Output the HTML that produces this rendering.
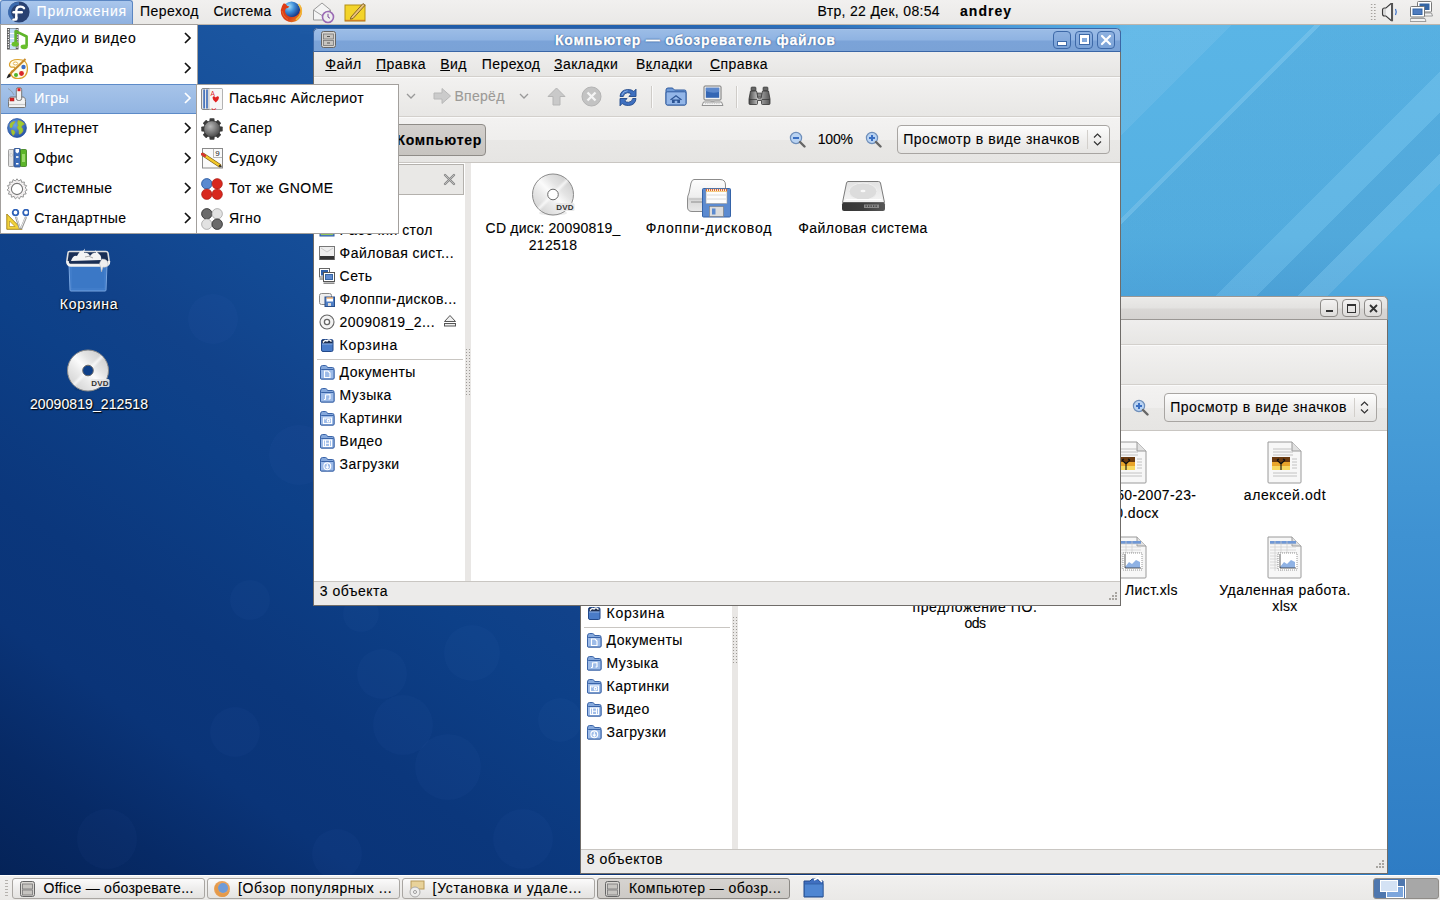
<!DOCTYPE html>
<html><head><meta charset="utf-8">
<style>
*{box-sizing:border-box;margin:0;padding:0}
html,body{width:1440px;height:900px;overflow:hidden}
body{position:relative;font-family:"Liberation Sans",sans-serif;font-size:13px;color:#000;
background:
 linear-gradient(32deg,#062560 0%,#0b3477 25%,#124592 42%,#1d5ba8 52%,#3f92d6 64%,#5ab4e6 76%,#62bbea 100%);}
.a{position:absolute}
.t{position:absolute;font-size:14px;line-height:16px;white-space:nowrap;letter-spacing:0.45px;-webkit-text-stroke:0.12px currentColor}
.b{font-weight:bold}
/* panels */
#toppanel{left:0;top:0;width:1440px;height:25px;background:linear-gradient(#f1f0ef,#eae9e7);border-bottom:1px solid #bdb6ad}
#botpanel{left:0;top:875px;width:1440px;height:25px;background:linear-gradient(#f1f0ef,#eae9e7);border-top:1px solid #fff}
/* window */
.win{position:absolute;width:808px;height:578px;background:#edeceb;border:1px solid #6f6c69;border-top:none;border-radius:5px 5px 0 0}
.title{position:absolute;left:-1px;top:0;width:808px;height:24px;border-radius:5px 5px 0 0;border:1px solid #3a66a6;
 background:linear-gradient(#a9c8ee 0,#9bbce6 1px,#8fb3e2 11px,#7ba3d8 12px,#7aa2d6 22px)}
.inactive .title{border-color:#9a9794;background:linear-gradient(#f4f3f2 0,#ebeae8 1px,#e3e2e0 11px,#d9d7d5 12px,#d4d2d0 22px)}
.wbtn{position:absolute;top:2px;width:18px;height:18px;border:1px solid #3d69a8;border-radius:4px;background:linear-gradient(#8eb1e0,#7aa2d7)}
.inactive .wbtn{border-color:#8d8a87;background:linear-gradient(#f3f2f1,#dedcda)}
.menubar{position:absolute;left:0;top:24px;width:806px;height:25px;background:linear-gradient(#efeeed,#e7e6e4);border-bottom:1px solid #d3d0cc}
.toolbar{position:absolute;left:0;top:49px;width:806px;height:40px;background:linear-gradient(#f2f1f0,#e8e7e5);border-bottom:1px solid #d3d0cc;border-top:1px solid #fafafa}
.locbar{position:absolute;left:0;top:89px;width:806px;height:46px;background:linear-gradient(#f3f2f1 0,#efeeed 50%,#e9e8e6 51%,#e6e5e3 100%);border-bottom:1px solid #c9c6c2;border-top:1px solid #fafafa}
.side{position:absolute;left:0;top:135px;width:151px;height:418px;background:#fff}
.handle{position:absolute;left:151px;top:135px;width:6px;height:418px;background:#e9e7e5}
.view{position:absolute;left:157px;top:135px;width:649px;height:418px;background:#fff}
.status{position:absolute;left:0;top:553px;width:806px;height:24px;background:#ecebea;border-top:1px solid #c9c6c2}
.combo{position:absolute;width:213px;height:29px;border:1px solid #a8a5a2;border-radius:4px;background:linear-gradient(#fdfdfd,#f0efee 50%,#e6e5e3)}
/* menus */
.menu{position:absolute;background:#fff;border:1px solid #a3a09d}
.hl{position:absolute;background:linear-gradient(#a6c3e9,#93b5e2);border-top:1px solid #5d8bc8;border-bottom:1px solid #5d8bc8}
.ic{position:absolute}
.shadowtxt{color:#fff;text-shadow:1px 1px 1px #000,0 0 2px #000}
</style></head>
<body>
<div class="a" style="left:0;top:24px;width:600px;height:851px;background:linear-gradient(35deg,#052358 0%,#072a66 10%,#0a3478 20%,#0b377c 30%,#0d4088 45%,#11428a 52%,#134a94 62%,#1a55a0 79%,#2060ac 100%)"></div><div class="a" style="left:1120px;top:24px;width:320px;height:851px;background:linear-gradient(#5ab5e6 0%,#55b0e2 25%,#4ea6dc 33%,#3f92d2 60%,#2e7cc4 100%)"></div><div class="a" style="left:300px;top:24px;width:830px;height:10px;background:linear-gradient(90deg,#1c58a3 0%,#2462ae 40%,#2f74bd 65%,#4a9ad8 85%,#5ab4e6 100%)"></div><div class="a" style="left:1120px;top:24px;width:320px;height:272px;background:linear-gradient(135deg,rgba(255,255,255,.07) 0 19%,transparent 19% 33%,rgba(255,255,255,.12) 33% 34%,rgba(0,30,90,.03) 34% 62%,rgba(255,255,255,.08) 62% 69%,rgba(0,30,90,.05) 69% 76%,rgba(255,255,255,.1) 76% 81%,transparent 81%)"></div><div class="a" style="left:415px;top:734px;width:66px;height:66px;border-radius:50%;background:rgba(120,170,255,.03)"></div><div class="a" style="left:373px;top:695px;width:60px;height:60px;border-radius:50%;background:rgba(120,170,255,.03)"></div><div class="a" style="left:444px;top:625px;width:56px;height:56px;border-radius:50%;background:rgba(120,170,255,.03)"></div><div class="a" style="left:343px;top:596px;width:36px;height:36px;border-radius:50%;background:rgba(120,170,255,.03)"></div><div class="a" style="left:493px;top:809px;width:60px;height:60px;border-radius:50%;background:rgba(120,170,255,.03)"></div><div class="a" style="left:312px;top:829px;width:50px;height:50px;border-radius:50%;background:rgba(120,170,255,.03)"></div><div class="a" style="left:357px;top:649px;width:50px;height:50px;border-radius:50%;background:rgba(120,170,255,.03)"></div><div class="a" style="left:188px;top:294px;width:50px;height:50px;border-radius:50%;background:rgba(120,170,255,.03)"></div><div class="a" style="left:269px;top:425px;width:60px;height:60px;border-radius:50%;background:rgba(120,170,255,.03)"></div><div class="a" style="left:210px;top:707px;width:50px;height:50px;border-radius:50%;background:rgba(120,170,255,.03)"></div><div class="a" style="left:77px;top:809px;width:60px;height:60px;border-radius:50%;background:rgba(120,170,255,.03)"></div><div class="a" style="left:538px;top:698px;width:44px;height:44px;border-radius:50%;background:rgba(120,170,255,.03)"></div><div class="a" style="left:230px;top:580px;width:40px;height:40px;border-radius:50%;background:rgba(120,170,255,.03)"></div><svg class="a" style="left:65px;top:247px" width="46" height="46" viewBox="0 0 46 46">
<path d="M4 17.5 L5 43 Q5 44 6 44 H40 Q41 44 41 43 L42 17.5Z" fill="#3b78c6" stroke="#7aa6e0" stroke-width="1"/>
<path d="M6 19 V42 H40 V19" fill="none" stroke="#5b90d8" stroke-width=".6" opacity=".7"/>
<path d="M3 6 Q3 4.5 4.5 4.5 H41 Q42.5 4.5 43 6 L44 13 Q44.5 17.5 41 17.5 H5 Q1.5 17.5 2 13Z" fill="#1a2f55" stroke="#e0e0e0" stroke-width="1.6"/>
<path d="M2.5 14 Q2.5 18.5 6 18.5 H40 Q44 18.5 44 14" fill="none" stroke="#f2f2f2" stroke-width="2.6"/>
<path d="M6 14 Q8 8 12 9 Q15 3 18 4 L20 1.5 L19 6 Q23 5 25 9 Q28 5 31 6 L30 3 L34 7 Q37 9 36 13 Z" fill="#f4f4f4"/>
<path d="M20 10 Q24 8 28 11" stroke="#aaa" stroke-width="1" fill="none"/>
<path d="M37 12 Q43 12 43 17 Q42 21 38 20 L36.5 25 L35.5 19 Q33 17 37 12Z" fill="#eeeeee" stroke="#bbb" stroke-width=".5"/>
</svg><div class="t shadowtxt" style="left:29px;top:296.15px;width:120px;text-align:center;letter-spacing:0.73px">Корзина</div><svg class="a" style="left:66px;top:349px" width="44" height="44" viewBox="0 0 44 44">
<defs><linearGradient id="dl66349" x1="0" y1="1" x2="1" y2="0"><stop offset="0" stop-color="#c9c9c9"/><stop offset=".35" stop-color="#e9e9e9"/><stop offset=".5" stop-color="#fbfbfb"/><stop offset=".65" stop-color="#e4e4e4"/><stop offset="1" stop-color="#c4c4c4"/></linearGradient>
<linearGradient id="dm66349" x1="0" y1="0" x2="1" y2="1"><stop offset="0" stop-color="#fff" stop-opacity="0"/><stop offset=".45" stop-color="#fff" stop-opacity=".0"/><stop offset=".5" stop-color="#fff" stop-opacity=".7"/><stop offset=".55" stop-color="#fff" stop-opacity="0"/></linearGradient></defs>
<ellipse cx="22" cy="40" rx="14" ry="2.5" fill="#000" opacity=".08"/>
<circle cx="22" cy="21.5" r="20.5" fill="url(#dl66349)" stroke="#8a8a8a"/>
<circle cx="22" cy="21.5" r="20" fill="url(#dm66349)"/>
<circle cx="22" cy="21.5" r="5.3" fill="#0e3f88" stroke="#6a6a6a"/>
<rect x="24.5" y="30" width="19" height="8" rx="1.5" fill="#e6e6e6" opacity=".92"/>
<text x="25.3" y="36.8" font-size="8" font-weight="bold" fill="#333" font-family="Liberation Sans" letter-spacing=".2">DVD</text>
</svg><div class="t shadowtxt" style="left:19px;top:396.15px;width:140px;text-align:center;letter-spacing:0.09px">20090819_212518</div><div class="win inactive" style="left:580px;top:296px"><div class="title"><div class="wbtn" style="left:739px"><div class="a" style="left:5px;top:10px;width:7px;height:2px;background:#333"></div></div><div class="wbtn" style="left:761px"><div class="a" style="left:4px;top:4px;width:9px;height:9px;border:1px solid #333;border-top-width:2px"></div></div><div class="wbtn" style="left:783px"><svg class="a" style="left:3px;top:3px" width="11" height="11" viewBox="0 0 11 11"><path d="M2 2 L9 9 M9 2 L2 9" stroke="#333" stroke-width="1.8"/></svg></div></div><div class="menubar"></div><div class="toolbar"></div><div class="locbar"></div><div class="side"></div><div class="handle"></div><div class="view"></div><div class="status"></div><div class="a" style="left:151px;top:320px;width:6px;height:47px;background-image:radial-gradient(circle at 1.5px 1.5px,#9d9a96 0.55px,transparent 0.9px);background-size:3px 3px"></div><div class="t" style="letter-spacing:0.46px;left:11.3px;top:28.15px"><u>Ф</u>айл</div><div class="t" style="letter-spacing:0.44px;left:62.1px;top:28.15px"><u>П</u>равка</div><div class="t" style="letter-spacing:0.45px;left:126.2px;top:28.15px"><u>В</u>ид</div><div class="t" style="letter-spacing:0.45px;left:167.7px;top:28.15px">Пере<u>х</u>од</div><div class="t" style="letter-spacing:0.45px;left:240px;top:28.15px"><u>З</u>акладки</div><div class="t" style="letter-spacing:0.45px;left:322px;top:28.15px">В<u>к</u>ладки</div><div class="t" style="letter-spacing:0.45px;left:396px;top:28.15px"><u>С</u>правка</div><svg class="a" style="left:92px;top:65px" width="10" height="7" viewBox="0 0 10 7"><path d="M1 1 L5 5 L9 1" stroke="#999" stroke-width="1.3" fill="none"/></svg><svg class="a" style="left:119px;top:59px" width="19" height="18" viewBox="0 0 19 18"><path d="M1 6 H9 V1.5 L17.5 9 L9 16.5 V12 H1Z" fill="#cbcbcb" stroke="#b8b8b8"/></svg><div class="t" style="left:140.4px;top:60.15px;color:#9c9a97;letter-spacing:0.31px">Вперёд</div><svg class="a" style="left:205px;top:65px" width="10" height="7" viewBox="0 0 10 7"><path d="M1 1 L5 5 L9 1" stroke="#999" stroke-width="1.3" fill="none"/></svg><svg class="a" style="left:233px;top:59px" width="19" height="19" viewBox="0 0 19 19"><path d="M9.5 1 L18 9.5 H13 V18 H6 V9.5 H1Z" fill="#c9c9c9" stroke="#b5b5b5"/></svg><svg class="a" style="left:267px;top:58px" width="21" height="21" viewBox="0 0 21 21"><circle cx="10.5" cy="10.5" r="9.5" fill="#c3c3c3" stroke="#b3b3b3"/><path d="M6.5 6.5 L14.5 14.5 M14.5 6.5 L6.5 14.5" stroke="#f4f4f4" stroke-width="2.4"/></svg><svg class="a" style="left:304px;top:59px" width="20" height="21" viewBox="0 0 20 21"><path d="M2 9.5 Q2.5 3 9.5 2.5 Q13.5 2.3 15.8 4.5 L18 2.2 V9.5 H10.8 L13.2 7.2 Q11.8 5.6 9.6 5.7 Q5.6 6 5.3 9.5Z" fill="#3f70c0" stroke="#23498a" stroke-width=".9" stroke-linejoin="round"/><path d="M18 11.5 Q17.5 18 10.5 18.5 Q6.5 18.7 4.2 16.5 L2 18.8 V11.5 H9.2 L6.8 13.8 Q8.2 15.4 10.4 15.3 Q14.4 15 14.7 11.5Z" fill="#3f70c0" stroke="#23498a" stroke-width=".9" stroke-linejoin="round"/><path d="M4 8 Q5 4 9.5 3.8" stroke="#8fb4ea" stroke-width=".9" fill="none"/></svg><div class="a" style="left:337px;top:58px;width:1px;height:22px;background:#cfccc8;box-shadow:1px 0 0 #fafafa"></div><svg class="a" style="left:351px;top:59px" width="22" height="19" viewBox="0 0 22 19"><path d="M1 3 Q1 1 3 1 H7 Q8 1 8.8 2.2 L9.5 3 H19.5 Q21 3 21 4.5 V16.5 Q21 18 19.5 18 H2.5 Q1 18 1 16.5Z" fill="#6f9ad6" stroke="#2f5a9e"/><path d="M1 6 Q1 4.8 2.2 4.8 H19.8 Q21 4.8 21 6 V16.5 Q21 18 19.5 18 H2.5 Q1 18 1 16.5Z" fill="#93b6e8" stroke="#2f5a9e"/><path d="M5 12.5 L11 8 L17 12.5 L16 13.2 L11 9.6 L6 13.2Z M7 12.5 H15 V16 H12.3 V13.8 H9.7 V16 H7Z" fill="#2c5494"/></svg><svg class="a" style="left:387px;top:57px" width="23" height="22" viewBox="0 0 23 22"><rect x="3" y="1" width="17" height="14" rx="1" fill="#f2f2f2" stroke="#777"/><rect x="4.8" y="2.8" width="13.4" height="10" fill="#3466b4"/><path d="M4.8 2.8 H18.2 V7 Q11 9 4.8 6Z" fill="#5c88cc"/><rect x="9.5" y="15" width="4" height="2" fill="#bbb"/><path d="M2.5 17 H20.5 L22 20.5 H1Z" fill="#f4f4f4" stroke="#888" stroke-width=".9"/><path d="M4 18.6 H19" stroke="#bbb" stroke-width=".8" stroke-dasharray="1 .8"/></svg><div class="a" style="left:422px;top:58px;width:1px;height:22px;background:#cfccc8;box-shadow:1px 0 0 #fafafa"></div><svg class="a" style="left:434px;top:58px" width="23" height="19" viewBox="0 0 23 19"><defs><linearGradient id="bng" x1="0" y1="0" x2="1" y2="0"><stop offset="0" stop-color="#4a4a4a"/><stop offset=".4" stop-color="#bdbdbd"/><stop offset="1" stop-color="#555"/></linearGradient></defs><rect x="3" y="1" width="5" height="4" rx="1" fill="#666" stroke="#333" stroke-width=".6"/><rect x="15" y="1" width="5" height="4" rx="1" fill="#666" stroke="#333" stroke-width=".6"/><path d="M2.5 5 H8.5 L10 12 H13 L14.5 5 H20.5 L22 13 V17.5 Q22 18.5 21 18.5 H14.5 Q13.5 18.5 13.5 17.5 V14.5 H9.5 V17.5 Q9.5 18.5 8.5 18.5 H2 Q1 18.5 1 17.5 V13Z" fill="url(#bng)" stroke="#333" stroke-width=".8"/><rect x="9.5" y="7" width="4" height="4" fill="#888" stroke="#333" stroke-width=".6"/><path d="M1.5 13.5 H9 M14 13.5 H21.5" stroke="#333" stroke-width=".7"/></svg><div class="a" style="left:40px;top:96px;width:132px;height:32px;border:1px solid #8f8c88;border-radius:4px;background:linear-gradient(#d3d0cd,#c7c4c0)"></div><div class="t b" style="left:82.5px;top:104.15px;letter-spacing:0.7px">Компьютер</div><svg class="a" style="left:475px;top:103px" width="17" height="17" viewBox="0 0 17 17"><circle cx="7" cy="7" r="5.6" fill="#b9d3f2" stroke="#6f8fba" stroke-width="1.2"/><path d="M4 7 H10" stroke="#3a6fc2" stroke-width="2"/><path d="M11 11 L15.5 15.5" stroke="#666" stroke-width="2.4" stroke-linecap="round"/></svg><div class="t" style="left:503.7px;top:103.15px;letter-spacing:-0.17px">100%</div><svg class="a" style="left:551px;top:103px" width="17" height="17" viewBox="0 0 17 17"><circle cx="7" cy="7" r="5.6" fill="#b9d3f2" stroke="#6f8fba" stroke-width="1.2"/><path d="M4 7 H10 M7 4 V10" stroke="#3a6fc2" stroke-width="2"/><path d="M11 11 L15.5 15.5" stroke="#666" stroke-width="2.4" stroke-linecap="round"/></svg><div class="combo" style="left:583px;top:97px"></div><div class="t" style="left:589.2px;top:103.15px;letter-spacing:0.53px">Просмотр в виде значков</div><div class="a" style="left:773px;top:102px;width:1px;height:19px;background:#d2cfcb"></div><svg class="a" style="left:779px;top:104px" width="9" height="15" viewBox="0 0 9 15"><path d="M1 5.5 L4.5 2 L8 5.5 M1 9.5 L4.5 13 L8 9.5" stroke="#333" stroke-width="1.2" fill="none"/></svg><div class="a" style="left:0;top:136px;width:150px;height:31px;background:#e9e8e6;border:1px solid #b4b1ad;border-left:none"></div><svg class="a" style="left:129px;top:145px" width="13" height="13" viewBox="0 0 13 13"><path d="M2 2 L11 11 M11 2 L2 11" stroke="#888" stroke-width="2.4" stroke-linecap="round"/><path d="M2 2 L11 11 M11 2 L2 11" stroke="#bbb" stroke-width="1" stroke-linecap="round"/></svg><div class="a" style="left:5px;top:171px;width:16px;height:16px;line-height:0"><svg width="16" height="16" viewBox="0 0 16 16"><path d="M1 3.5 H6 L7 2.5 H10 L11 3.5 H15 V15 H1Z" fill="#8fb0dd" stroke="#3d65a5"/><path d="M4 10 L8 6.5 L12 10 V14 H4Z" fill="#fff"/></svg></div><div class="t" style="letter-spacing:1.04px;left:25.6px;top:171.15px">andrey</div><div class="a" style="left:5px;top:194px;width:16px;height:16px;line-height:0"><svg width="16" height="16" viewBox="0 0 16 16"><rect x="1" y="2" width="14" height="12" fill="#5d8fd6" stroke="#2d5a9e"/><rect x="2" y="10" width="12" height="3" fill="#8fc45a"/></svg></div><div class="t" style="letter-spacing:0.45px;left:25.6px;top:194.15px">Рабочий стол</div><div class="a" style="left:5px;top:217px;width:16px;height:16px;line-height:0"><svg width="16" height="16" viewBox="0 0 16 16"><rect x="0.5" y="1.5" width="15" height="13" fill="#eee" stroke="#777"/><rect x="1" y="11" width="14" height="3.5" fill="#333"/><path d="M2 3 L8 7 L14 3" stroke="#ccc" fill="none"/></svg></div><div class="t" style="letter-spacing:0.45px;left:25.6px;top:217.15px">Файловая сист...</div><div class="a" style="left:5px;top:240px;width:16px;height:16px;line-height:0"><svg width="16" height="16" viewBox="0 0 16 16"><rect x="0.5" y="0.5" width="10" height="8.5" fill="#fff" stroke="#666"/><rect x="2" y="2" width="7" height="5.5" fill="#2f5fa8"/><path d="M0.5 11 H5" stroke="#888" stroke-width="1.5"/><rect x="4.5" y="4.5" width="11" height="9" fill="#fff" stroke="#555"/><rect x="6" y="6" width="8" height="6" fill="#3465a4"/><rect x="7" y="7" width="6" height="4" fill="#5f8ad0"/><path d="M4.5 15.2 H15.5" stroke="#888" stroke-width="1.5"/></svg></div><div class="t" style="letter-spacing:0.45px;left:25.6px;top:240.15px">Сеть</div><div class="a" style="left:5px;top:263px;width:16px;height:16px;line-height:0"><svg width="16" height="16" viewBox="0 0 16 16"><rect x="0.5" y="2.5" width="12" height="11" rx="2" fill="#eee" stroke="#888"/><rect x="6" y="6" width="9.5" height="9.5" fill="#4f7fc6" stroke="#2a4f8a"/><rect x="7.5" y="6.5" width="6.5" height="4" fill="#fff"/><path d="M7.5 7 H14" stroke="#e88a2a" stroke-width="1"/><rect x="9" y="12" width="3" height="3" fill="#ddd"/></svg></div><div class="t" style="letter-spacing:0.45px;left:25.6px;top:263.15px">Флоппи-дисков...</div><div class="a" style="left:5px;top:286px;width:16px;height:16px;line-height:0"><svg width="16" height="16" viewBox="0 0 16 16"><circle cx="8" cy="8" r="7" fill="#f4f4f4" stroke="#666" stroke-width="1.1"/><circle cx="8" cy="8" r="2.6" fill="#fff" stroke="#666" stroke-width="1.3"/><path d="M11 3.5 L12.5 5" stroke="#ddd"/></svg></div><div class="t" style="letter-spacing:0.45px;left:25.6px;top:286.15px">20090819_2...</div><div class="a" style="left:5px;top:309px;width:16px;height:16px;line-height:0"><svg width="16" height="16" viewBox="0 0 16 16"><rect x="2.5" y="2.5" width="11.5" height="12" rx="1.5" fill="#4a7cc8" stroke="#23498a"/><rect x="3" y="3" width="10.5" height="3.5" fill="#1e2f50"/><path d="M4 5.5 Q6 2.5 8 4 Q10 1.5 12.5 4.5" stroke="#fff" stroke-width="1.4" fill="none"/><path d="M3 7 H13.5" stroke="#9dbbe8" stroke-width=".8"/></svg></div><div class="t" style="letter-spacing:0.73px;left:25.6px;top:309.15px">Корзина</div><div class="a" style="left:5px;top:336px;width:16px;height:16px;line-height:0"><svg width="16" height="16" viewBox="0 0 16 16"><path d="M1.5 4 Q1.5 1.5 3.5 1.5 H6.5 Q7.5 1.5 8 2.5 L8.5 3.5 H13.5 Q15 3.5 15 5 V14 Q15 15 14 15 H2.5 Q1.5 15 1.5 14Z" fill="#86a9dc" stroke="#3a64a8"/><path d="M1.5 6.5 Q1.5 5.5 2.5 5.5 H14 Q15 5.5 15 6.5 V14 Q15 15 14 15 H2.5 Q1.5 15 1.5 14Z" fill="#9dbbe8" stroke="#3a64a8"/><g fill="none" stroke="#fff" stroke-width="1.1"><path d="M5.5 7 H9 L11 9 V13.5 H5.5Z"/></g></svg></div><div class="t" style="letter-spacing:0.45px;left:25.6px;top:336.15px">Документы</div><div class="a" style="left:5px;top:359px;width:16px;height:16px;line-height:0"><svg width="16" height="16" viewBox="0 0 16 16"><path d="M1.5 4 Q1.5 1.5 3.5 1.5 H6.5 Q7.5 1.5 8 2.5 L8.5 3.5 H13.5 Q15 3.5 15 5 V14 Q15 15 14 15 H2.5 Q1.5 15 1.5 14Z" fill="#86a9dc" stroke="#3a64a8"/><path d="M1.5 6.5 Q1.5 5.5 2.5 5.5 H14 Q15 5.5 15 6.5 V14 Q15 15 14 15 H2.5 Q1.5 15 1.5 14Z" fill="#9dbbe8" stroke="#3a64a8"/><g fill="none" stroke="#fff" stroke-width="1.1"><path d="M6.5 12.5 V8 L11 7.5 V12 M5 12.5 H6.5 M9.5 12 H11"/></g></svg></div><div class="t" style="letter-spacing:0.45px;left:25.6px;top:359.15px">Музыка</div><div class="a" style="left:5px;top:382px;width:16px;height:16px;line-height:0"><svg width="16" height="16" viewBox="0 0 16 16"><path d="M1.5 4 Q1.5 1.5 3.5 1.5 H6.5 Q7.5 1.5 8 2.5 L8.5 3.5 H13.5 Q15 3.5 15 5 V14 Q15 15 14 15 H2.5 Q1.5 15 1.5 14Z" fill="#86a9dc" stroke="#3a64a8"/><path d="M1.5 6.5 Q1.5 5.5 2.5 5.5 H14 Q15 5.5 15 6.5 V14 Q15 15 14 15 H2.5 Q1.5 15 1.5 14Z" fill="#9dbbe8" stroke="#3a64a8"/><g fill="none" stroke="#fff" stroke-width="1.1"><rect x="4.5" y="8" width="8" height="5.5"/><circle cx="9.5" cy="10.7" r="1.3"/><path d="M5.5 9 H7"/></g></svg></div><div class="t" style="letter-spacing:0.45px;left:25.6px;top:382.15px">Картинки</div><div class="a" style="left:5px;top:405px;width:16px;height:16px;line-height:0"><svg width="16" height="16" viewBox="0 0 16 16"><path d="M1.5 4 Q1.5 1.5 3.5 1.5 H6.5 Q7.5 1.5 8 2.5 L8.5 3.5 H13.5 Q15 3.5 15 5 V14 Q15 15 14 15 H2.5 Q1.5 15 1.5 14Z" fill="#86a9dc" stroke="#3a64a8"/><path d="M1.5 6.5 Q1.5 5.5 2.5 5.5 H14 Q15 5.5 15 6.5 V14 Q15 15 14 15 H2.5 Q1.5 15 1.5 14Z" fill="#9dbbe8" stroke="#3a64a8"/><g fill="none" stroke="#fff" stroke-width="1.1"><rect x="4.5" y="7" width="8" height="6.5"/><path d="M6.5 7 V13.5 M10.5 7 V13.5 M6.5 10.2 H10.5"/></g></svg></div><div class="t" style="letter-spacing:0.45px;left:25.6px;top:405.15px">Видео</div><div class="a" style="left:5px;top:428px;width:16px;height:16px;line-height:0"><svg width="16" height="16" viewBox="0 0 16 16"><path d="M1.5 4 Q1.5 1.5 3.5 1.5 H6.5 Q7.5 1.5 8 2.5 L8.5 3.5 H13.5 Q15 3.5 15 5 V14 Q15 15 14 15 H2.5 Q1.5 15 1.5 14Z" fill="#86a9dc" stroke="#3a64a8"/><path d="M1.5 6.5 Q1.5 5.5 2.5 5.5 H14 Q15 5.5 15 6.5 V14 Q15 15 14 15 H2.5 Q1.5 15 1.5 14Z" fill="#9dbbe8" stroke="#3a64a8"/><g fill="none" stroke="#fff" stroke-width="1.1"><circle cx="8.3" cy="10.3" r="3.4"/><path d="M8.3 8 V12 M6.8 10.6 L8.3 12.1 L9.8 10.6"/></g></svg></div><div class="t" style="letter-spacing:0.45px;left:25.6px;top:428.15px">Загрузки</div><div class="a" style="left:3px;top:331px;width:146px;height:1px;background:#c9c6c2"></div><svg class="a" style="left:129px;top:286px" width="14" height="13" viewBox="0 0 14 13"><path d="M7 1.5 L12.5 7.5 H1.5Z" fill="#f0f0f0" stroke="#555"/><rect x="1.5" y="9.5" width="11" height="2.5" fill="#f0f0f0" stroke="#555"/></svg><svg class="a" style="left:531px;top:145px" width="36" height="43" viewBox="0 0 36 43">
<path d="M1 1 H25 L34 10 V41 Q34 42 33 42 H2 Q1 42 1 41Z" fill="#f7f7f7" stroke="#9a9a9a"/>
<path d="M25 1 V10 H34" fill="#e0e0e0" stroke="#9a9a9a"/>
<path d="M6 8 H26 M6 11 H26 M6 14 H26" stroke="#bbb" stroke-width=".9"/><rect x="5" y="16" width="18" height="13" fill="#6a3a10"/><rect x="5" y="21" width="18" height="8" fill="#e9a42a"/><rect x="5" y="25" width="18" height="4" fill="#f8d860"/><path d="M14 29 V21 M10 19 L14 23 L18 19 M12 18 L10 19 M16 18 L18 19" stroke="#111" stroke-width="1.1" fill="none"/><path d="M25 18 H30 M25 21 H30 M25 24 H30 M25 27 H30 M6 32 H30 M6 35 H30" stroke="#bbb" stroke-width=".9"/></svg><svg class="a" style="left:686px;top:145px" width="36" height="43" viewBox="0 0 36 43">
<path d="M1 1 H25 L34 10 V41 Q34 42 33 42 H2 Q1 42 1 41Z" fill="#f7f7f7" stroke="#9a9a9a"/>
<path d="M25 1 V10 H34" fill="#e0e0e0" stroke="#9a9a9a"/>
<path d="M6 8 H26 M6 11 H26 M6 14 H26" stroke="#bbb" stroke-width=".9"/><rect x="5" y="16" width="18" height="13" fill="#6a3a10"/><rect x="5" y="21" width="18" height="8" fill="#e9a42a"/><rect x="5" y="25" width="18" height="4" fill="#f8d860"/><path d="M14 29 V21 M10 19 L14 23 L18 19 M12 18 L10 19 M16 18 L18 19" stroke="#111" stroke-width="1.1" fill="none"/><path d="M25 18 H30 M25 21 H30 M25 24 H30 M25 27 H30 M6 32 H30 M6 35 H30" stroke="#bbb" stroke-width=".9"/></svg><div class="t" style="left:420px;top:191.15px;width:195.3px;text-align:right;letter-spacing:0.35px">Договор-50-2007-23-</div><div class="t" style="left:520px;top:208.65px;width:58px;text-align:right;letter-spacing:0.4px">10.docx</div><div class="t" style="left:634px;top:191.15px;width:140px;text-align:center;letter-spacing:0.57px">алексей.odt</div><svg class="a" style="left:531px;top:240px" width="36" height="43" viewBox="0 0 36 43">
<path d="M1 1 H25 L34 10 V41 Q34 42 33 42 H2 Q1 42 1 41Z" fill="#f7f7f7" stroke="#9a9a9a"/>
<path d="M25 1 V10 H34" fill="#e0e0e0" stroke="#9a9a9a"/>
<rect x="3" y="5" width="26" height="3" fill="#6f98d6"/><path d="M3 8 H29 M3 11 H29 M3 14 H29 M3 17 H29 M3 20 H29 M3 23 H29 M3 26 H29 M3 29 H29 M3 32 H29 M8 5 V35 M14 5 V35 M20 5 V35" stroke="#ccc" stroke-width=".7"/><rect x="11" y="17" width="19" height="17" fill="#fff" stroke="#555" stroke-width=".6" stroke-dasharray="1 1"/><path d="M13 31 L17 26 L20 28 L24 24 L28 26 V32 H13Z" fill="#8fb2e4"/><path d="M13 18 V32 H29" stroke="#333" stroke-width=".8" fill="none"/></svg><svg class="a" style="left:686px;top:240px" width="36" height="43" viewBox="0 0 36 43">
<path d="M1 1 H25 L34 10 V41 Q34 42 33 42 H2 Q1 42 1 41Z" fill="#f7f7f7" stroke="#9a9a9a"/>
<path d="M25 1 V10 H34" fill="#e0e0e0" stroke="#9a9a9a"/>
<rect x="3" y="5" width="26" height="3" fill="#6f98d6"/><path d="M3 8 H29 M3 11 H29 M3 14 H29 M3 17 H29 M3 20 H29 M3 23 H29 M3 26 H29 M3 29 H29 M3 32 H29 M8 5 V35 M14 5 V35 M20 5 V35" stroke="#ccc" stroke-width=".7"/><rect x="11" y="17" width="19" height="17" fill="#fff" stroke="#555" stroke-width=".6" stroke-dasharray="1 1"/><path d="M13 31 L17 26 L20 28 L24 24 L28 26 V32 H13Z" fill="#8fb2e4"/><path d="M13 18 V32 H29" stroke="#333" stroke-width=".8" fill="none"/></svg><div class="t" style="left:477px;top:285.65px;width:120px;text-align:right;letter-spacing:0.4px">Лист.xls</div><div class="t" style="left:619px;top:285.65px;width:170px;text-align:center;letter-spacing:0.48px">Удаленная работа.</div><div class="t" style="left:654px;top:301.95px;width:100px;text-align:center;letter-spacing:0.3px">xlsx</div><div class="t" style="left:304px;top:302.65px;width:180px;text-align:center;letter-spacing:0.58px">предложение ПО.</div><div class="t" style="left:344px;top:318.95px;width:100px;text-align:center;letter-spacing:-0.54px">ods</div><div class="t" style="letter-spacing:0.48px;left:5.75px;top:555.15px">8 объектов</div><svg class="a" style="left:792px;top:563px" width="12" height="12" viewBox="0 0 12 12"><g fill="#a8a5a1"><rect x="9" y="1" width="2" height="2"/><rect x="6" y="4" width="2" height="2"/><rect x="9" y="4" width="2" height="2"/><rect x="3" y="7" width="2" height="2"/><rect x="6" y="7" width="2" height="2"/><rect x="9" y="7" width="2" height="2"/></g></svg></div><div class="win" style="left:313px;top:28px"><div class="title"><div class="wbtn" style="left:739px"><div class="a" style="left:4px;top:10px;width:8px;height:3px;background:#fff;border:1px solid #3d69a8;box-sizing:content-box;margin:-1px"></div></div><div class="wbtn" style="left:761px"><div class="a" style="left:3.5px;top:3px;width:9px;height:9px;border:2px solid #fff;border-top-width:3px;outline:1px solid #3d69a8"></div></div><div class="wbtn" style="left:783px"><svg class="a" style="left:2px;top:2px" width="12" height="12" viewBox="0 0 12 12"><path d="M2 2 L10 10 M10 2 L2 10" stroke="#fff" stroke-width="2.2" stroke-linecap="round"/></svg></div></div><div class="t b" style="left:241px;top:3.65px;color:#fff;letter-spacing:0.78px;-webkit-text-stroke:0.4px #fff;text-shadow:0 0 1px #1f4a88,0 0 1px #1f4a88,0 0 2px #2f5c9c">Компьютер — обозреватель файлов</div>
<svg class="a" style="left:7px;top:3px" width="15" height="17" viewBox="0 0 15 17"><rect x="0.5" y="0.5" width="14" height="16" rx="2" fill="#d8d6d2" stroke="#666"/><rect x="2.5" y="3" width="10" height="5" fill="#c6c4c0" stroke="#777" stroke-width=".8"/><rect x="2.5" y="9.5" width="10" height="5" fill="#c6c4c0" stroke="#777" stroke-width=".8"/><path d="M6 5.5 H9 M6 12 H9" stroke="#555"/></svg><div class="menubar"></div><div class="toolbar"></div><div class="locbar"></div><div class="side"></div><div class="handle"></div><div class="view"></div><div class="status"></div><div class="a" style="left:151px;top:320px;width:6px;height:47px;background-image:radial-gradient(circle at 1.5px 1.5px,#9d9a96 0.55px,transparent 0.9px);background-size:3px 3px"></div><div class="t" style="letter-spacing:0.46px;left:11.3px;top:28.15px"><u>Ф</u>айл</div><div class="t" style="letter-spacing:0.44px;left:62.1px;top:28.15px"><u>П</u>равка</div><div class="t" style="letter-spacing:0.45px;left:126.2px;top:28.15px"><u>В</u>ид</div><div class="t" style="letter-spacing:0.45px;left:167.7px;top:28.15px">Пере<u>х</u>од</div><div class="t" style="letter-spacing:0.45px;left:240px;top:28.15px"><u>З</u>акладки</div><div class="t" style="letter-spacing:0.45px;left:322px;top:28.15px">В<u>к</u>ладки</div><div class="t" style="letter-spacing:0.45px;left:396px;top:28.15px"><u>С</u>правка</div><svg class="a" style="left:92px;top:65px" width="10" height="7" viewBox="0 0 10 7"><path d="M1 1 L5 5 L9 1" stroke="#999" stroke-width="1.3" fill="none"/></svg><svg class="a" style="left:119px;top:59px" width="19" height="18" viewBox="0 0 19 18"><path d="M1 6 H9 V1.5 L17.5 9 L9 16.5 V12 H1Z" fill="#cbcbcb" stroke="#b8b8b8"/></svg><div class="t" style="left:140.4px;top:60.15px;color:#9c9a97;letter-spacing:0.31px">Вперёд</div><svg class="a" style="left:205px;top:65px" width="10" height="7" viewBox="0 0 10 7"><path d="M1 1 L5 5 L9 1" stroke="#999" stroke-width="1.3" fill="none"/></svg><svg class="a" style="left:233px;top:59px" width="19" height="19" viewBox="0 0 19 19"><path d="M9.5 1 L18 9.5 H13 V18 H6 V9.5 H1Z" fill="#c9c9c9" stroke="#b5b5b5"/></svg><svg class="a" style="left:267px;top:58px" width="21" height="21" viewBox="0 0 21 21"><circle cx="10.5" cy="10.5" r="9.5" fill="#c3c3c3" stroke="#b3b3b3"/><path d="M6.5 6.5 L14.5 14.5 M14.5 6.5 L6.5 14.5" stroke="#f4f4f4" stroke-width="2.4"/></svg><svg class="a" style="left:304px;top:59px" width="20" height="21" viewBox="0 0 20 21"><path d="M2 9.5 Q2.5 3 9.5 2.5 Q13.5 2.3 15.8 4.5 L18 2.2 V9.5 H10.8 L13.2 7.2 Q11.8 5.6 9.6 5.7 Q5.6 6 5.3 9.5Z" fill="#3f70c0" stroke="#23498a" stroke-width=".9" stroke-linejoin="round"/><path d="M18 11.5 Q17.5 18 10.5 18.5 Q6.5 18.7 4.2 16.5 L2 18.8 V11.5 H9.2 L6.8 13.8 Q8.2 15.4 10.4 15.3 Q14.4 15 14.7 11.5Z" fill="#3f70c0" stroke="#23498a" stroke-width=".9" stroke-linejoin="round"/><path d="M4 8 Q5 4 9.5 3.8" stroke="#8fb4ea" stroke-width=".9" fill="none"/></svg><div class="a" style="left:337px;top:58px;width:1px;height:22px;background:#cfccc8;box-shadow:1px 0 0 #fafafa"></div><svg class="a" style="left:351px;top:59px" width="22" height="19" viewBox="0 0 22 19"><path d="M1 3 Q1 1 3 1 H7 Q8 1 8.8 2.2 L9.5 3 H19.5 Q21 3 21 4.5 V16.5 Q21 18 19.5 18 H2.5 Q1 18 1 16.5Z" fill="#6f9ad6" stroke="#2f5a9e"/><path d="M1 6 Q1 4.8 2.2 4.8 H19.8 Q21 4.8 21 6 V16.5 Q21 18 19.5 18 H2.5 Q1 18 1 16.5Z" fill="#93b6e8" stroke="#2f5a9e"/><path d="M5 12.5 L11 8 L17 12.5 L16 13.2 L11 9.6 L6 13.2Z M7 12.5 H15 V16 H12.3 V13.8 H9.7 V16 H7Z" fill="#2c5494"/></svg><svg class="a" style="left:387px;top:57px" width="23" height="22" viewBox="0 0 23 22"><rect x="3" y="1" width="17" height="14" rx="1" fill="#f2f2f2" stroke="#777"/><rect x="4.8" y="2.8" width="13.4" height="10" fill="#3466b4"/><path d="M4.8 2.8 H18.2 V7 Q11 9 4.8 6Z" fill="#5c88cc"/><rect x="9.5" y="15" width="4" height="2" fill="#bbb"/><path d="M2.5 17 H20.5 L22 20.5 H1Z" fill="#f4f4f4" stroke="#888" stroke-width=".9"/><path d="M4 18.6 H19" stroke="#bbb" stroke-width=".8" stroke-dasharray="1 .8"/></svg><div class="a" style="left:422px;top:58px;width:1px;height:22px;background:#cfccc8;box-shadow:1px 0 0 #fafafa"></div><svg class="a" style="left:434px;top:58px" width="23" height="19" viewBox="0 0 23 19"><defs><linearGradient id="bng" x1="0" y1="0" x2="1" y2="0"><stop offset="0" stop-color="#4a4a4a"/><stop offset=".4" stop-color="#bdbdbd"/><stop offset="1" stop-color="#555"/></linearGradient></defs><rect x="3" y="1" width="5" height="4" rx="1" fill="#666" stroke="#333" stroke-width=".6"/><rect x="15" y="1" width="5" height="4" rx="1" fill="#666" stroke="#333" stroke-width=".6"/><path d="M2.5 5 H8.5 L10 12 H13 L14.5 5 H20.5 L22 13 V17.5 Q22 18.5 21 18.5 H14.5 Q13.5 18.5 13.5 17.5 V14.5 H9.5 V17.5 Q9.5 18.5 8.5 18.5 H2 Q1 18.5 1 17.5 V13Z" fill="url(#bng)" stroke="#333" stroke-width=".8"/><rect x="9.5" y="7" width="4" height="4" fill="#888" stroke="#333" stroke-width=".6"/><path d="M1.5 13.5 H9 M14 13.5 H21.5" stroke="#333" stroke-width=".7"/></svg><div class="a" style="left:40px;top:96px;width:132px;height:32px;border:1px solid #8f8c88;border-radius:4px;background:linear-gradient(#d3d0cd,#c7c4c0)"></div><div class="t b" style="left:82.5px;top:104.15px;letter-spacing:0.7px">Компьютер</div><svg class="a" style="left:475px;top:103px" width="17" height="17" viewBox="0 0 17 17"><circle cx="7" cy="7" r="5.6" fill="#b9d3f2" stroke="#6f8fba" stroke-width="1.2"/><path d="M4 7 H10" stroke="#3a6fc2" stroke-width="2"/><path d="M11 11 L15.5 15.5" stroke="#666" stroke-width="2.4" stroke-linecap="round"/></svg><div class="t" style="left:503.7px;top:103.15px;letter-spacing:-0.17px">100%</div><svg class="a" style="left:551px;top:103px" width="17" height="17" viewBox="0 0 17 17"><circle cx="7" cy="7" r="5.6" fill="#b9d3f2" stroke="#6f8fba" stroke-width="1.2"/><path d="M4 7 H10 M7 4 V10" stroke="#3a6fc2" stroke-width="2"/><path d="M11 11 L15.5 15.5" stroke="#666" stroke-width="2.4" stroke-linecap="round"/></svg><div class="combo" style="left:583px;top:97px"></div><div class="t" style="left:589.2px;top:103.15px;letter-spacing:0.53px">Просмотр в виде значков</div><div class="a" style="left:773px;top:102px;width:1px;height:19px;background:#d2cfcb"></div><svg class="a" style="left:779px;top:104px" width="9" height="15" viewBox="0 0 9 15"><path d="M1 5.5 L4.5 2 L8 5.5 M1 9.5 L4.5 13 L8 9.5" stroke="#333" stroke-width="1.2" fill="none"/></svg><div class="a" style="left:0;top:136px;width:150px;height:31px;background:#e9e8e6;border:1px solid #b4b1ad;border-left:none"></div><svg class="a" style="left:129px;top:145px" width="13" height="13" viewBox="0 0 13 13"><path d="M2 2 L11 11 M11 2 L2 11" stroke="#888" stroke-width="2.4" stroke-linecap="round"/><path d="M2 2 L11 11 M11 2 L2 11" stroke="#bbb" stroke-width="1" stroke-linecap="round"/></svg><div class="a" style="left:5px;top:171px;width:16px;height:16px;line-height:0"><svg width="16" height="16" viewBox="0 0 16 16"><path d="M1 3.5 H6 L7 2.5 H10 L11 3.5 H15 V15 H1Z" fill="#8fb0dd" stroke="#3d65a5"/><path d="M4 10 L8 6.5 L12 10 V14 H4Z" fill="#fff"/></svg></div><div class="t" style="letter-spacing:1.04px;left:25.6px;top:171.15px">andrey</div><div class="a" style="left:5px;top:194px;width:16px;height:16px;line-height:0"><svg width="16" height="16" viewBox="0 0 16 16"><rect x="1" y="2" width="14" height="12" fill="#5d8fd6" stroke="#2d5a9e"/><rect x="2" y="10" width="12" height="3" fill="#8fc45a"/></svg></div><div class="t" style="letter-spacing:0.45px;left:25.6px;top:194.15px">Рабочий стол</div><div class="a" style="left:5px;top:217px;width:16px;height:16px;line-height:0"><svg width="16" height="16" viewBox="0 0 16 16"><rect x="0.5" y="1.5" width="15" height="13" fill="#eee" stroke="#777"/><rect x="1" y="11" width="14" height="3.5" fill="#333"/><path d="M2 3 L8 7 L14 3" stroke="#ccc" fill="none"/></svg></div><div class="t" style="letter-spacing:0.45px;left:25.6px;top:217.15px">Файловая сист...</div><div class="a" style="left:5px;top:240px;width:16px;height:16px;line-height:0"><svg width="16" height="16" viewBox="0 0 16 16"><rect x="0.5" y="0.5" width="10" height="8.5" fill="#fff" stroke="#666"/><rect x="2" y="2" width="7" height="5.5" fill="#2f5fa8"/><path d="M0.5 11 H5" stroke="#888" stroke-width="1.5"/><rect x="4.5" y="4.5" width="11" height="9" fill="#fff" stroke="#555"/><rect x="6" y="6" width="8" height="6" fill="#3465a4"/><rect x="7" y="7" width="6" height="4" fill="#5f8ad0"/><path d="M4.5 15.2 H15.5" stroke="#888" stroke-width="1.5"/></svg></div><div class="t" style="letter-spacing:0.45px;left:25.6px;top:240.15px">Сеть</div><div class="a" style="left:5px;top:263px;width:16px;height:16px;line-height:0"><svg width="16" height="16" viewBox="0 0 16 16"><rect x="0.5" y="2.5" width="12" height="11" rx="2" fill="#eee" stroke="#888"/><rect x="6" y="6" width="9.5" height="9.5" fill="#4f7fc6" stroke="#2a4f8a"/><rect x="7.5" y="6.5" width="6.5" height="4" fill="#fff"/><path d="M7.5 7 H14" stroke="#e88a2a" stroke-width="1"/><rect x="9" y="12" width="3" height="3" fill="#ddd"/></svg></div><div class="t" style="letter-spacing:0.45px;left:25.6px;top:263.15px">Флоппи-дисков...</div><div class="a" style="left:5px;top:286px;width:16px;height:16px;line-height:0"><svg width="16" height="16" viewBox="0 0 16 16"><circle cx="8" cy="8" r="7" fill="#f4f4f4" stroke="#666" stroke-width="1.1"/><circle cx="8" cy="8" r="2.6" fill="#fff" stroke="#666" stroke-width="1.3"/><path d="M11 3.5 L12.5 5" stroke="#ddd"/></svg></div><div class="t" style="letter-spacing:0.45px;left:25.6px;top:286.15px">20090819_2...</div><div class="a" style="left:5px;top:309px;width:16px;height:16px;line-height:0"><svg width="16" height="16" viewBox="0 0 16 16"><rect x="2.5" y="2.5" width="11.5" height="12" rx="1.5" fill="#4a7cc8" stroke="#23498a"/><rect x="3" y="3" width="10.5" height="3.5" fill="#1e2f50"/><path d="M4 5.5 Q6 2.5 8 4 Q10 1.5 12.5 4.5" stroke="#fff" stroke-width="1.4" fill="none"/><path d="M3 7 H13.5" stroke="#9dbbe8" stroke-width=".8"/></svg></div><div class="t" style="letter-spacing:0.73px;left:25.6px;top:309.15px">Корзина</div><div class="a" style="left:5px;top:336px;width:16px;height:16px;line-height:0"><svg width="16" height="16" viewBox="0 0 16 16"><path d="M1.5 4 Q1.5 1.5 3.5 1.5 H6.5 Q7.5 1.5 8 2.5 L8.5 3.5 H13.5 Q15 3.5 15 5 V14 Q15 15 14 15 H2.5 Q1.5 15 1.5 14Z" fill="#86a9dc" stroke="#3a64a8"/><path d="M1.5 6.5 Q1.5 5.5 2.5 5.5 H14 Q15 5.5 15 6.5 V14 Q15 15 14 15 H2.5 Q1.5 15 1.5 14Z" fill="#9dbbe8" stroke="#3a64a8"/><g fill="none" stroke="#fff" stroke-width="1.1"><path d="M5.5 7 H9 L11 9 V13.5 H5.5Z"/></g></svg></div><div class="t" style="letter-spacing:0.45px;left:25.6px;top:336.15px">Документы</div><div class="a" style="left:5px;top:359px;width:16px;height:16px;line-height:0"><svg width="16" height="16" viewBox="0 0 16 16"><path d="M1.5 4 Q1.5 1.5 3.5 1.5 H6.5 Q7.5 1.5 8 2.5 L8.5 3.5 H13.5 Q15 3.5 15 5 V14 Q15 15 14 15 H2.5 Q1.5 15 1.5 14Z" fill="#86a9dc" stroke="#3a64a8"/><path d="M1.5 6.5 Q1.5 5.5 2.5 5.5 H14 Q15 5.5 15 6.5 V14 Q15 15 14 15 H2.5 Q1.5 15 1.5 14Z" fill="#9dbbe8" stroke="#3a64a8"/><g fill="none" stroke="#fff" stroke-width="1.1"><path d="M6.5 12.5 V8 L11 7.5 V12 M5 12.5 H6.5 M9.5 12 H11"/></g></svg></div><div class="t" style="letter-spacing:0.45px;left:25.6px;top:359.15px">Музыка</div><div class="a" style="left:5px;top:382px;width:16px;height:16px;line-height:0"><svg width="16" height="16" viewBox="0 0 16 16"><path d="M1.5 4 Q1.5 1.5 3.5 1.5 H6.5 Q7.5 1.5 8 2.5 L8.5 3.5 H13.5 Q15 3.5 15 5 V14 Q15 15 14 15 H2.5 Q1.5 15 1.5 14Z" fill="#86a9dc" stroke="#3a64a8"/><path d="M1.5 6.5 Q1.5 5.5 2.5 5.5 H14 Q15 5.5 15 6.5 V14 Q15 15 14 15 H2.5 Q1.5 15 1.5 14Z" fill="#9dbbe8" stroke="#3a64a8"/><g fill="none" stroke="#fff" stroke-width="1.1"><rect x="4.5" y="8" width="8" height="5.5"/><circle cx="9.5" cy="10.7" r="1.3"/><path d="M5.5 9 H7"/></g></svg></div><div class="t" style="letter-spacing:0.45px;left:25.6px;top:382.15px">Картинки</div><div class="a" style="left:5px;top:405px;width:16px;height:16px;line-height:0"><svg width="16" height="16" viewBox="0 0 16 16"><path d="M1.5 4 Q1.5 1.5 3.5 1.5 H6.5 Q7.5 1.5 8 2.5 L8.5 3.5 H13.5 Q15 3.5 15 5 V14 Q15 15 14 15 H2.5 Q1.5 15 1.5 14Z" fill="#86a9dc" stroke="#3a64a8"/><path d="M1.5 6.5 Q1.5 5.5 2.5 5.5 H14 Q15 5.5 15 6.5 V14 Q15 15 14 15 H2.5 Q1.5 15 1.5 14Z" fill="#9dbbe8" stroke="#3a64a8"/><g fill="none" stroke="#fff" stroke-width="1.1"><rect x="4.5" y="7" width="8" height="6.5"/><path d="M6.5 7 V13.5 M10.5 7 V13.5 M6.5 10.2 H10.5"/></g></svg></div><div class="t" style="letter-spacing:0.45px;left:25.6px;top:405.15px">Видео</div><div class="a" style="left:5px;top:428px;width:16px;height:16px;line-height:0"><svg width="16" height="16" viewBox="0 0 16 16"><path d="M1.5 4 Q1.5 1.5 3.5 1.5 H6.5 Q7.5 1.5 8 2.5 L8.5 3.5 H13.5 Q15 3.5 15 5 V14 Q15 15 14 15 H2.5 Q1.5 15 1.5 14Z" fill="#86a9dc" stroke="#3a64a8"/><path d="M1.5 6.5 Q1.5 5.5 2.5 5.5 H14 Q15 5.5 15 6.5 V14 Q15 15 14 15 H2.5 Q1.5 15 1.5 14Z" fill="#9dbbe8" stroke="#3a64a8"/><g fill="none" stroke="#fff" stroke-width="1.1"><circle cx="8.3" cy="10.3" r="3.4"/><path d="M8.3 8 V12 M6.8 10.6 L8.3 12.1 L9.8 10.6"/></g></svg></div><div class="t" style="letter-spacing:0.45px;left:25.6px;top:428.15px">Загрузки</div><div class="a" style="left:3px;top:331px;width:146px;height:1px;background:#c9c6c2"></div><svg class="a" style="left:129px;top:286px" width="14" height="13" viewBox="0 0 14 13"><path d="M7 1.5 L12.5 7.5 H1.5Z" fill="#f0f0f0" stroke="#555"/><rect x="1.5" y="9.5" width="11" height="2.5" fill="#f0f0f0" stroke="#555"/></svg><svg class="a" style="left:217px;top:145px" width="44" height="44" viewBox="0 0 44 44">
<defs><linearGradient id="dl217145" x1="0" y1="1" x2="1" y2="0"><stop offset="0" stop-color="#c9c9c9"/><stop offset=".35" stop-color="#e9e9e9"/><stop offset=".5" stop-color="#fbfbfb"/><stop offset=".65" stop-color="#e4e4e4"/><stop offset="1" stop-color="#c4c4c4"/></linearGradient>
<linearGradient id="dm217145" x1="0" y1="0" x2="1" y2="1"><stop offset="0" stop-color="#fff" stop-opacity="0"/><stop offset=".45" stop-color="#fff" stop-opacity=".0"/><stop offset=".5" stop-color="#fff" stop-opacity=".7"/><stop offset=".55" stop-color="#fff" stop-opacity="0"/></linearGradient></defs>
<ellipse cx="22" cy="40" rx="14" ry="2.5" fill="#000" opacity=".08"/>
<circle cx="22" cy="21.5" r="20.5" fill="url(#dl217145)" stroke="#8a8a8a"/>
<circle cx="22" cy="21.5" r="20" fill="url(#dm217145)"/>
<circle cx="22" cy="21.5" r="5.3" fill="#fff" stroke="#6a6a6a"/>
<rect x="24.5" y="30" width="19" height="8" rx="1.5" fill="#e6e6e6" opacity=".92"/>
<text x="25.3" y="36.8" font-size="8" font-weight="bold" fill="#333" font-family="Liberation Sans" letter-spacing=".2">DVD</text>
</svg><div class="t" style="left:171.5px;top:192.45px;width:135px;text-align:center;letter-spacing:0.21px">CD диск: 20090819_</div><div class="t" style="left:209px;top:209.15px;width:60px;text-align:center;letter-spacing:0.32px">212518</div><svg class="a" style="left:372px;top:149px" width="46" height="41" viewBox="0 0 46 41">
<defs><linearGradient id="fb372" x1="0" y1="0" x2="0" y2="1"><stop offset="0" stop-color="#fdfdfd"/><stop offset=".55" stop-color="#eeeeee"/><stop offset=".6" stop-color="#d6d6d6"/><stop offset="1" stop-color="#e9e9e9"/></linearGradient></defs>
<path d="M8 2.5 H34 Q39.5 2.5 39.5 8 V30 Q39.5 34.5 35 34.5 H6 Q1.5 34.5 1.5 30 V22 Q1.5 19 3 16 L5 6 Q6 2.5 8 2.5Z" fill="url(#fb372)" stroke="#8c8c8c"/>
<path d="M3 22 H38" stroke="#bdbdbd" stroke-width="1"/>
<path d="M5 25 H16" stroke="#aaa" stroke-width="1.6"/>
<rect x="16.5" y="11.5" width="28" height="28.5" rx="1" fill="#5b8ad0" stroke="#3563a8"/>
<rect x="20" y="12" width="21" height="14.5" fill="#fdfdfd" stroke="#9a9a9a" stroke-width=".6"/>
<path d="M20 13 H41" stroke="#e0602a" stroke-width="1.8" stroke-dasharray="1 1"/>
<path d="M20 14.3 H41" stroke="#f0b040" stroke-width=".8"/>
<path d="M21 18 H40 M21 22 H40" stroke="#d0d0d0" stroke-width=".8"/>
<rect x="23.5" y="29.5" width="14" height="10" fill="#dcdcdc" stroke="#777" stroke-width=".6"/>
<rect x="26" y="31.5" width="3.5" height="6" fill="#5b8ad0"/>
</svg><div class="t" style="left:325px;top:192.45px;width:140px;text-align:center;letter-spacing:0.84px">Флоппи-дисковод</div><svg class="a" style="left:527px;top:152px" width="45" height="32" viewBox="0 0 45 32">
<defs><linearGradient id="hb527" x1="0" y1="0" x2="1" y2="0"><stop offset="0" stop-color="#353535"/><stop offset=".5" stop-color="#3d3d3d"/><stop offset="1" stop-color="#585858"/></linearGradient>
<linearGradient id="ht527" x1="0" y1="0" x2="0" y2="1"><stop offset="0" stop-color="#e2e2e2"/><stop offset="1" stop-color="#f4f4f4"/></linearGradient></defs>
<path d="M7 1.5 H37.5 Q39 1.5 39.5 3 L43.5 22.5 H1.5 L5.5 3 Q6 1.5 7 1.5Z" fill="url(#ht527)" stroke="#7a7a7a"/>
<ellipse cx="22" cy="11.5" rx="14" ry="8.5" fill="#dcdcdc" stroke="#efefef"/>
<ellipse cx="22" cy="11" rx="2.5" ry="1.3" fill="#f8f8f8"/>
<path d="M4.5 19.5 H40.5" stroke="#fff" stroke-width="1.2"/>
<rect x="1" y="22.5" width="43" height="8.5" rx="2" fill="url(#hb527)"/>
<rect x="23" y="24.5" width="15" height="3.5" fill="#8a8a8a"/>
<path d="M24.5 26.2 H36" stroke="#333" stroke-width="1.3" stroke-dasharray="1.3 1.2"/>
</svg><div class="t" style="left:479px;top:192.45px;width:140px;text-align:center;letter-spacing:0.46px">Файловая система</div><div class="t" style="letter-spacing:0.48px;left:5.75px;top:555.15px">3 объекта</div><svg class="a" style="left:792px;top:563px" width="12" height="12" viewBox="0 0 12 12"><g fill="#a8a5a1"><rect x="9" y="1" width="2" height="2"/><rect x="6" y="4" width="2" height="2"/><rect x="9" y="4" width="2" height="2"/><rect x="3" y="7" width="2" height="2"/><rect x="6" y="7" width="2" height="2"/><rect x="9" y="7" width="2" height="2"/></g></svg></div><!-- TOP -->
<div class="a" id="toppanel">
  <div class="a" style="left:0;top:0;width:133px;height:24px;background:linear-gradient(#a9c6ec,#8fb1e0);border:1px solid #5b86c2;border-bottom:none;border-radius:3px 3px 0 0"></div>
  <svg class="a" style="left:8px;top:1px" width="22" height="22" viewBox="0 0 22 22">
    <circle cx="11" cy="11" r="10.6" fill="#294172"/>
    <path d="M4.5 17.5 A8.6 8.6 0 0 1 11 2.6" stroke="#3c6eb4" stroke-width="3" fill="none" opacity=".9"/>
    <path d="M8.3 18.2 L8.3 9.8 Q8.3 5.6 12.6 5.6 Q15 5.6 16 7.2" stroke="#fff" stroke-width="2.4" fill="none" stroke-linecap="round"/>
    <path d="M5.6 11.2 L13.8 11.2" stroke="#fff" stroke-width="2.4" stroke-linecap="round"/>
    <path d="M8.3 16.5 Q8.3 19 5.4 18.6" stroke="#fff" stroke-width="2.4" fill="none" stroke-linecap="round"/>
  </svg>
  <div class="t" style="left:36.5px;top:3.15px;color:#fff;letter-spacing:0.86px">Приложения</div>
  <div class="t" style="left:140px;top:3.15px;letter-spacing:0.45px">Переход</div>
  <div class="t" style="left:213.5px;top:3.15px;letter-spacing:0.23px">Система</div>
  <svg class="a" style="left:279px;top:0px" width="24" height="23" viewBox="0 0 24 23">
    <defs><radialGradient id="ffg" cx="35%" cy="30%" r="70%"><stop offset="0" stop-color="#a6e2fb"/><stop offset=".45" stop-color="#3f8ed8"/><stop offset="1" stop-color="#13307e"/></radialGradient>
    <linearGradient id="fff" x1="0" y1="0" x2="1" y2="1"><stop offset="0" stop-color="#e23a12"/><stop offset=".6" stop-color="#d8401a"/><stop offset="1" stop-color="#f0a020"/></linearGradient></defs>
    <circle cx="12.5" cy="10" r="8.6" fill="url(#ffg)"/>
    <path d="M4.5 3.5 Q2.5 6 1.8 10 Q1.5 17 7 20.5 Q12 23.5 17.5 21 Q22.5 18 23 12 Q23 7 20.5 4.5 Q22 9 20 13 Q17 17.5 12 17 Q8 16.5 6.5 13 Q5.5 10.5 7 8.5 Q9 8.5 10.5 6.5 Q8 6.5 7 4.5 Q6.5 3 4.5 3.5Z" fill="url(#fff)"/>
    <path d="M19.5 4 Q23 8 22 13 Q21 17 17 20" stroke="#f6c83a" stroke-width="1.8" fill="none" opacity=".85"/>
    <path d="M3 11 Q4 17 9 19.5" stroke="#f07a2a" stroke-width="1" fill="none" opacity=".7"/>
  </svg>
  <svg class="a" style="left:312px;top:1px" width="23" height="23" viewBox="0 0 23 23">
    <path d="M1.5 9 L10 2 L18.5 9 L18.5 19 L1.5 19Z" fill="#f4f4f4" stroke="#9a9a9a"/>
    <path d="M1.5 9 L10 14.5 L18.5 9" fill="none" stroke="#a0a0a0"/>
    <circle cx="16" cy="16" r="5.5" fill="#eee" stroke="#9a6ab4" stroke-width="1.6"/>
    <path d="M16 12.8 L16 16 L18 17.3" stroke="#7a4a9a" stroke-width="1" fill="none"/>
  </svg>
  <svg class="a" style="left:344px;top:1px" width="23" height="22" viewBox="0 0 23 22">
    <rect x="1" y="4" width="20" height="16" fill="#f3d42a" stroke="#b39012"/>
    <path d="M1.5 19.5 L20.5 19.5" stroke="#c8502a" stroke-width="1.4" stroke-dasharray="1 1"/>
    <path d="M7 16 L19 2.5 L21 4.3 L9 17.5 L6.4 18.2Z" fill="#e9c27a" stroke="#6a4a1a" stroke-width=".8"/>
  </svg>
  <div class="t" style="left:817.5px;top:3.15px;letter-spacing:0.33px">Втр, 22 Дек, 08:54</div>
  <div class="t b" style="left:960px;top:3.15px;letter-spacing:1.04px">andrey</div>
  <div class="a" style="left:1370px;top:3px;width:6px;height:18px;background-image:radial-gradient(circle at 1.5px 1.5px,#a5a29e 0.6px,transparent 0.95px);background-size:3.2px 3px"></div>
  <svg class="a" style="left:1381px;top:2px" width="18" height="20" viewBox="0 0 18 20">
    <path d="M1.5 8 Q1.5 6 3.5 6 H5 L10 1.5 H11.5 V18.5 H10 L5 14 H3.5 Q1.5 14 1.5 12Z" fill="#d8d8d8" stroke="#3a3a3a" stroke-width="1.1"/>
    <path d="M5 7 L10 3 V17 L5 13Z" fill="#f2f2f2"/>
    <rect x="10" y="1" width="2" height="18.5" rx="1" fill="#555"/>
    <path d="M14.5 7 Q16 10 14.5 13" stroke="#3a70c8" stroke-width="1.2" fill="none"/>
  </svg>
  <svg class="a" style="left:1410px;top:1px" width="24" height="22" viewBox="0 0 24 22">
    <rect x="7.5" y="0.5" width="14" height="10.5" rx="1" fill="#fff" stroke="#777"/>
    <rect x="9.5" y="2.5" width="10" height="6.5" fill="#3465a4"/>
    <path d="M13 12 H21.5 L22.5 15 H13Z" fill="#f2f2f2" stroke="#888" stroke-width=".8"/>
    <rect x="0.5" y="5.5" width="14" height="10.5" rx="1" fill="#fff" stroke="#777"/>
    <rect x="2.5" y="7.5" width="10" height="6.5" fill="#3465a4"/>
    <rect x="3.5" y="8.5" width="8" height="4.5" fill="#4f7cc0"/>
    <path d="M0.5 17.5 H15 L16 20.5 H0Z" fill="#f2f2f2" stroke="#888" stroke-width=".8"/>
  </svg>
</div>


<div class="menu" style="left:0;top:24px;width:198px;height:210px">
  <div class="hl" style="left:0;top:59px;width:196px;height:30px"></div>
</div>
<!-- main menu icons+text (page coords) -->
<svg class="a" style="left:7px;top:28px" width="21" height="22" viewBox="0 0 21 22">
  <rect x="0" y="0" width="11.5" height="21.5" fill="#5a5a5a"/>
  <rect x="2.8" y="0.5" width="6" height="20.5" fill="#c4ddf6"/>
  <path d="M2.8 5.5 H8.8 M2.8 10.5 H8.8 M2.8 15.5 H8.8" stroke="#fff" stroke-width="1.2"/>
  <path d="M1.4 1 V21 M10.1 1 V21" stroke="#fff" stroke-width="1.3" stroke-dasharray="1.2 1.3"/>
  <path d="M8.6 15.5 V3.2 L19.6 8.5 V18" stroke="#5fb52a" stroke-width="2.6" fill="none" stroke-linejoin="round"/>
  <ellipse cx="8.2" cy="16.2" rx="3.6" ry="2.4" fill="#69c02c"/>
  <ellipse cx="17.2" cy="18.8" rx="3.6" ry="2.4" fill="#69c02c"/>
</svg>
<div class="t" style="left:34.3px;top:30.15px;letter-spacing:0.61px">Аудио и видео</div>
<svg class="a" style="left:183px;top:31px" width="9" height="14" viewBox="0 0 9 14"><path d="M2 2 L7 7 L2 12" stroke="#111" stroke-width="1.7" fill="none"/></svg>
<svg class="a" style="left:6px;top:58px" width="23" height="22" viewBox="0 0 23 22">
  <path d="M12 1.5 Q21.5 1.5 21.5 10 Q21.5 20.5 12 20.5 Q6 20.5 5 16 Q4.5 13 7.5 12 Q10 11 8 9 Q3 10 3.5 6 Q4.5 1.5 12 1.5Z" fill="#fffbe8" stroke="#dca22c" stroke-width="1.2"/>
  <ellipse cx="9.5" cy="5.5" rx="2.2" ry="1.5" fill="#fff" stroke="#dca22c" stroke-width=".8"/>
  <circle cx="17.5" cy="9" r="2.2" fill="#3c6ec8"/>
  <circle cx="15.5" cy="15.5" r="2.4" fill="#d8282a"/>
  <circle cx="10" cy="17" r="2" fill="#4fb52a"/>
  <path d="M3 17 L19.5 1" stroke="#c88a2a" stroke-width="2"/>
  <path d="M0.5 20.5 L2 17 Q3 15.5 4.5 16.5 Q5.5 18 4 19Z" fill="#222"/>
</svg>
<div class="t" style="left:34.3px;top:60.15px;letter-spacing:0.45px">Графика</div>
<svg class="a" style="left:183px;top:61px" width="9" height="14" viewBox="0 0 9 14"><path d="M2 2 L7 7 L2 12" stroke="#111" stroke-width="1.7" fill="none"/></svg>
<svg class="a" style="left:7px;top:87px" width="20" height="22" viewBox="0 0 20 22">
  <path d="M1.5 14.5 Q1.5 10 4 10 H16 Q18.5 10 18.5 14.5 V19.5 Q18.5 20.5 17.5 20.5 H2.5 Q1.5 20.5 1.5 19.5Z" fill="#f3f3f3" stroke="#777"/>
  <path d="M2 17.5 H18" stroke="#c8c8c8" stroke-width="1.2"/>
  <rect x="3" y="11" width="4" height="3" fill="#d22" stroke="#922" stroke-width=".5"/>
  <rect x="9.3" y="0.5" width="5.4" height="13" rx="2.2" fill="#f2f2f2" stroke="#777"/>
  <rect x="10.5" y="1.2" width="3" height="3" fill="#d22"/>
  <path d="M1 1.5 Q5 3.5 7 8" stroke="#888" stroke-width=".6" fill="none"/>
</svg>
<div class="t" style="left:34.3px;top:90.15px;letter-spacing:0.45px;color:#fff">Игры</div>
<svg class="a" style="left:183px;top:91px" width="9" height="14" viewBox="0 0 9 14"><path d="M2 2 L7 7 L2 12" stroke="#fff" stroke-width="1.7" fill="none"/></svg>
<svg class="a" style="left:7px;top:118px" width="20" height="20" viewBox="0 0 20 20">
  <defs><radialGradient id="glb" cx="40%" cy="35%" r="65%"><stop offset="0" stop-color="#6aa6e8"/><stop offset="1" stop-color="#2858a8"/></radialGradient></defs>
  <circle cx="10" cy="10" r="9.4" fill="url(#glb)" stroke="#2a52a0" stroke-width=".8"/>
  <path d="M3 6 Q5 3 8 3.5 Q7 6 5.5 7 Q6 9 4 10 Q2.5 9 3 6Z M11 2.5 Q15 2.5 17.5 6 Q15 7 14 9 Q16 10 16 13 Q14 17 12 16 Q12.5 12 11 11 Q9.5 9 11.5 7.5 Q10 6 11 2.5Z M4.5 12 Q7 11.5 8 14 Q7.5 17 6 17.5 Q4 15 4.5 12Z" fill="#9acd32" stroke="#c8a020" stroke-width=".5"/>
</svg>
<div class="t" style="left:34.3px;top:120.15px;letter-spacing:0.45px">Интернет</div>
<svg class="a" style="left:183px;top:121px" width="9" height="14" viewBox="0 0 9 14"><path d="M2 2 L7 7 L2 12" stroke="#111" stroke-width="1.7" fill="none"/></svg>
<svg class="a" style="left:8px;top:148px" width="19" height="20" viewBox="0 0 19 20">
  <rect x="0.5" y="1.5" width="5.5" height="17" rx="1" fill="#e4e4e4" stroke="#8a8a8a" stroke-width=".8"/>
  <rect x="6" y="0.5" width="6.5" height="18.5" rx="1" fill="#3c6cb8" stroke="#23498a" stroke-width=".8"/>
  <rect x="12.5" y="1.5" width="6" height="17" rx="1" fill="#5cb52a" stroke="#3a7a1a" stroke-width=".8"/>
  <path d="M7.5 1 H11 V4 L9.25 5.5 L7.5 4Z" fill="#fff"/>
  <rect x="8" y="8" width="2.5" height="2" fill="#fff" opacity=".8"/>
  <rect x="8" y="15" width="2.5" height="1.5" fill="#fff"/>
  <rect x="2" y="6" width="2.5" height="2" fill="#fff" stroke="#999" stroke-width=".4"/>
  <rect x="14" y="6" width="3" height="8" fill="#9ad86a"/>
</svg>
<div class="t" style="left:34.3px;top:150.15px;letter-spacing:0.45px">Офис</div>
<svg class="a" style="left:183px;top:151px" width="9" height="14" viewBox="0 0 9 14"><path d="M2 2 L7 7 L2 12" stroke="#111" stroke-width="1.7" fill="none"/></svg>
<svg class="a" style="left:6px;top:178px" width="22" height="22" viewBox="0 0 22 22">
  <path d="M11 0.8 L12.6 3 L15 1.6 L15.6 4.3 L18.4 4 L18 6.8 L20.6 7.6 L19.2 10 L21.2 11.8 L19 13.4 L20.2 15.9 L17.4 16.3 L17.3 19.1 L14.6 18.4 L13.4 20.9 L11.4 19 L9.4 20.9 L8.1 18.4 L5.4 19.2 L5.2 16.4 L2.4 16.1 L3.5 13.5 L1.1 12 L3 10 L1.5 7.6 L4.1 6.8 L3.6 4 L6.4 4.3 L7 1.6 L9.4 3Z" fill="#f6f6f6" stroke="#8a8a8a" stroke-width=".9"/>
  <circle cx="11" cy="11" r="5.6" fill="#fff" stroke="#777" stroke-width="1.1"/>
  <circle cx="11" cy="11" r="7.2" fill="none" stroke="#e0b8c0" stroke-width=".5" stroke-dasharray="1 2"/>
</svg>
<div class="t" style="left:34.3px;top:180.15px;letter-spacing:0.45px">Системные</div>
<svg class="a" style="left:183px;top:181px" width="9" height="14" viewBox="0 0 9 14"><path d="M2 2 L7 7 L2 12" stroke="#111" stroke-width="1.7" fill="none"/></svg>
<svg class="a" style="left:6px;top:209px" width="23" height="21" viewBox="0 0 23 21">
  <path d="M0.8 20.3 V5 L16 20.3Z" fill="#f2d23a" stroke="#a08012" stroke-width=".9"/>
  <path d="M3.5 17.5 V12 L9 17.5Z" fill="#fff" stroke="#a08012" stroke-width=".6"/>
  <path d="M10 8 L14 20 M20 8 L15 20" stroke="#9a9a9a" stroke-width="2.2"/>
  <path d="M10.5 8.5 L14 19 M19.5 8.5 L15 19" stroke="#e8e8e8" stroke-width="1"/>
  <circle cx="9.5" cy="3.5" r="2.8" fill="#fff" stroke="#2f62b8" stroke-width="1.8"/>
  <circle cx="20" cy="3.5" r="2.8" fill="#fff" stroke="#2f62b8" stroke-width="1.8"/>
</svg>
<div class="t" style="left:34.3px;top:210.15px;letter-spacing:0.45px">Стандартные</div>
<svg class="a" style="left:183px;top:211px" width="9" height="14" viewBox="0 0 9 14"><path d="M2 2 L7 7 L2 12" stroke="#111" stroke-width="1.7" fill="none"/></svg>
<div class="menu" style="left:196px;top:84px;width:203px;height:150px"></div>
<svg class="a" style="left:201px;top:88px" width="22" height="22" viewBox="0 0 22 22">
  <rect x="0.5" y="0.5" width="21" height="21" rx="1.5" fill="#e8e8e8" stroke="#8a8a8a"/>
  <rect x="2.3" y="1.5" width="1.6" height="19" fill="#3a6ab8"/>
  <rect x="5.2" y="1.5" width="1.6" height="19" fill="#3a6ab8"/>
  <rect x="8" y="0.5" width="13.5" height="21" rx="1" fill="#f6f6f6" stroke="#aaa" stroke-width=".6"/>
  <text x="9.5" y="7.5" font-size="6.5" fill="#d22" font-family="Liberation Sans">A</text>
  <path d="M14.8 9.5 Q12.3 7 11.5 9.8 Q11.5 11.8 14.8 14.5 Q18 11.8 18 9.8 Q17.2 7 14.8 9.5Z" fill="#e02020"/>
  <text x="20" y="15" font-size="6.5" fill="#d22" font-family="Liberation Sans" transform="rotate(180 17.5 17.5)">A</text>
</svg>
<div class="t" style="left:229px;top:90.15px;letter-spacing:0.42px">Пасьянс Айслериот</div>
<svg class="a" style="left:201px;top:118px" width="22" height="22" viewBox="0 0 22 22">
  <defs><radialGradient id="mng" cx="40%" cy="35%" r="65%"><stop offset="0" stop-color="#b8b8b8"/><stop offset="1" stop-color="#4a4a4a"/></radialGradient></defs>
  <g fill="#3a3a3a">
    <rect x="8.5" y="0.3" width="5" height="4" rx=".8"/><rect x="8.5" y="17.7" width="5" height="4" rx=".8"/>
    <rect x="0.3" y="8.5" width="4" height="5" rx=".8"/><rect x="17.7" y="8.5" width="4" height="5" rx=".8"/>
    <rect x="8.5" y="0.3" width="5" height="4" rx=".8" transform="rotate(45 11 11)"/><rect x="8.5" y="17.7" width="5" height="4" rx=".8" transform="rotate(45 11 11)"/>
    <rect x="0.3" y="8.5" width="4" height="5" rx=".8" transform="rotate(45 11 11)"/><rect x="17.7" y="8.5" width="4" height="5" rx=".8" transform="rotate(45 11 11)"/>
  </g>
  <circle cx="11" cy="11" r="8.3" fill="url(#mng)" stroke="#333" stroke-width=".8"/>
</svg>
<div class="t" style="left:229px;top:120.15px;letter-spacing:0.45px">Сапер</div>
<svg class="a" style="left:201px;top:148px" width="22" height="21" viewBox="0 0 22 21">
  <rect x="1.5" y="0.5" width="20" height="19.5" fill="#fafafa" stroke="#8a8a8a"/>
  <path d="M12.5 0.5 V9.5 H21.5" stroke="#999" stroke-width=".7" fill="none"/>
  <text x="14.2" y="8" font-size="8" fill="#222" font-family="Liberation Sans">9</text>
  <path d="M2 6.5 L18.5 17.5" stroke="#7a5a10" stroke-width="3.6" stroke-linecap="round"/>
  <path d="M2 6.5 L18.5 17.5" stroke="#f2c82a" stroke-width="2.4"/>
  <path d="M1.3 6 L3.8 7.7" stroke="#d83030" stroke-width="2.6" stroke-linecap="round"/>
  <path d="M18 17.2 L20.5 19" stroke="#333" stroke-width="1.4"/>
</svg>
<div class="t" style="left:229px;top:150.15px;letter-spacing:0.45px">Судоку</div>
<svg class="a" style="left:201px;top:178px" width="22" height="22" viewBox="0 0 22 22">
  <circle cx="5.8" cy="5.8" r="5.2" fill="#5a8ad0" stroke="#2a5aa0" stroke-width=".9"/>
  <circle cx="16.2" cy="5.8" r="5.2" fill="#d8281e" stroke="#a01a12" stroke-width=".6"/>
  <circle cx="5.8" cy="16.2" r="5.2" fill="#d8281e" stroke="#a01a12" stroke-width=".6"/>
  <circle cx="16.2" cy="16.2" r="5.2" fill="#d8281e" stroke="#a01a12" stroke-width=".6"/>
</svg>
<div class="t" style="left:229px;top:180.15px;letter-spacing:0.45px">Тот же GNOME</div>
<svg class="a" style="left:201px;top:208px" width="22" height="22" viewBox="0 0 22 22">
  <circle cx="5.8" cy="5.8" r="5.2" fill="#6a6a6a" stroke="#333" stroke-width=".9"/>
  <circle cx="16.2" cy="5.8" r="5.2" fill="#e2e2e2" stroke="#999" stroke-width=".7"/>
  <circle cx="5.8" cy="16.2" r="5.2" fill="#e2e2e2" stroke="#999" stroke-width=".7"/>
  <circle cx="16.2" cy="16.2" r="5.2" fill="#6a6a6a" stroke="#333" stroke-width=".9"/>
</svg>
<div class="t" style="left:229px;top:210.15px;letter-spacing:0.45px">Ягно</div>


<div class="a" id="botpanel"><div class="a" style="left:5px;top:4px;width:3px;height:17px;background:repeating-linear-gradient(#b5b2ae 0 1px,transparent 1px 3px)"></div><div class="a" style="left:12px;top:2px;width:193px;height:21px;border:1px solid #a9a6a2;border-radius:3px;background:linear-gradient(#fbfbfb,#eeedec 50%,#e4e3e1)"></div><div class="t" style="left:43.5px;top:4.15px;letter-spacing:0.28px">Office — обозревате...</div><svg class="a" style="left:20px;top:5px" width="15" height="16" viewBox="0 0 15 16"><rect x="0.5" y="0.5" width="14" height="15" rx="2" fill="#d8d6d2" stroke="#666"/><rect x="2.5" y="3" width="10" height="5" fill="#c6c4c0" stroke="#777" stroke-width=".8"/><rect x="2.5" y="9" width="10" height="5" fill="#c6c4c0" stroke="#777" stroke-width=".8"/></svg><div class="a" style="left:207px;top:2px;width:193px;height:21px;border:1px solid #a9a6a2;border-radius:3px;background:linear-gradient(#fbfbfb,#eeedec 50%,#e4e3e1)"></div><div class="t" style="left:238px;top:4.15px;letter-spacing:0.6px">[Обзор популярных ...</div><svg class="a" style="left:213px;top:4px" width="18" height="18" viewBox="0 0 18 18"><circle cx="9" cy="9" r="8" fill="#e9a25a"/><circle cx="10" cy="8" r="5" fill="#6f9bd8"/><path d="M2 9 Q3 16 9 17 Q15 17 16.5 11 Q13 14 9 13.5 Q5 13 5 8 Q4 5 5 3 Q1 5 2 9Z" fill="#e59a4a"/></svg><div class="a" style="left:402px;top:2px;width:193px;height:21px;border:1px solid #a9a6a2;border-radius:3px;background:linear-gradient(#fbfbfb,#eeedec 50%,#e4e3e1)"></div><div class="t" style="left:432.6px;top:4.15px;letter-spacing:0.65px">[Установка и удале...</div><svg class="a" style="left:408px;top:4px" width="18" height="18" viewBox="0 0 18 18"><rect x="3" y="1" width="13" height="8" fill="#e8d29a" stroke="#b89a5a"/><circle cx="7" cy="12" r="5" fill="#eee" stroke="#aaa"/><circle cx="7" cy="12" r="1.5" fill="#fff" stroke="#999"/></svg><div class="a" style="left:597px;top:2px;width:193px;height:21px;border:1px solid #8c8985;border-radius:3px;background:linear-gradient(#d6d3d0,#cdcac6)"></div><div class="t" style="left:629px;top:4.15px;letter-spacing:0.44px">Компьютер — обозр...</div><svg class="a" style="left:605px;top:5px" width="15" height="16" viewBox="0 0 15 16"><rect x="0.5" y="0.5" width="14" height="15" rx="2" fill="#d8d6d2" stroke="#666"/><rect x="2.5" y="3" width="10" height="5" fill="#c6c4c0" stroke="#777" stroke-width=".8"/><rect x="2.5" y="9" width="10" height="5" fill="#c6c4c0" stroke="#777" stroke-width=".8"/></svg><svg class="a" style="left:803px;top:1px" width="21" height="21" viewBox="0 0 21 21"><path d="M1 4 H7 L9 2 H15 L16 4 H20 V20 H1Z" fill="#3f6fc0" stroke="#23498a"/><rect x="1.5" y="7" width="18.5" height="12.5" fill="#4f86d2" stroke="#2f5da0" stroke-width=".8"/><path d="M11 3 L15 1 L19 5" stroke="#fff" stroke-width="1.5" fill="none"/></svg><div class="a" style="left:1373px;top:2px;width:66px;height:21px;border-radius:3px;background:#a7a7a7;border:1px solid #8f8c88"></div><div class="a" style="left:1374px;top:3px;width:31px;height:19px;border-radius:2px 0 0 2px;background:#4f77ae"></div><div class="a" style="left:1405px;top:3px;width:1px;height:19px;background:#fff"></div><div class="a" style="left:1380px;top:4px;width:18px;height:12px;background:#d4e2f4;border:1px solid #fff"></div><div class="a" style="left:1386px;top:10px;width:18px;height:12px;background:#7da6dc;border:1px solid #fff;border-left-width:1px"></div><div class="a" style="left:1380px;top:4px;width:18px;height:12px;background:#d4e2f4;border:1px solid #fff"></div></div>
</body></html>
